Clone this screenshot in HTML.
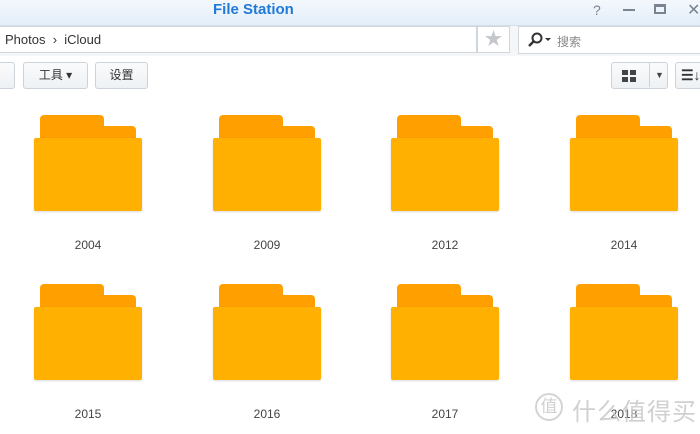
<!DOCTYPE html>
<html><head><meta charset="utf-8"><style>
*{margin:0;padding:0;box-sizing:border-box}
body{width:700px;height:434px;overflow:hidden;background:#fff;font-family:"Liberation Sans","Noto Sans CJK SC",sans-serif;position:relative}
.title{position:absolute;left:0;top:0;width:700px;height:26px;background:linear-gradient(#f4f8fc,#e3eef9);border-bottom:1px solid #d6dee8}
.title b{position:absolute;left:213px;top:1px;font-size:15px;color:#1f7ad8;font-family:"Liberation Sans",sans-serif}
.bar{position:absolute;top:26px;left:0;width:700px;height:30px;background:#f4f6f8}
.path{position:absolute;left:-2px;top:26px;width:479px;height:27px;background:#fff;border:1px solid #d0d6dd;font-size:13px;color:#333;padding:5px 0 0 6px}
.star{position:absolute;left:477px;top:26px;width:33px;height:27px;background:#fff;border:1px solid #d0d6dd;color:#c4c8cc;font-size:18px;text-align:center;line-height:25px}
.search{position:absolute;left:518px;top:26px;width:190px;height:28px;background:#fff;border:1px solid #d0d6dd;font-size:12px;color:#888;padding:6px 0 0 38px}
.btn{position:absolute;top:62px;height:27px;border:1px solid #cdd3da;border-radius:3px;background:linear-gradient(#fafbfc,#eef1f4);font-size:12px;color:#333;text-align:center;line-height:25px}
.f{position:absolute;width:110px;height:150px}
.f .t1{position:absolute;left:6px;top:0;width:64px;height:22px;background:#ff9f00;border-radius:4px 4px 0 0}
.f .t2{position:absolute;left:6px;top:11px;width:96px;height:14px;background:#ff9f00;border-radius:0 4px 0 0}
.f .bd{position:absolute;left:0;top:23px;width:108px;height:73px;background:#ffb000;border-radius:2px;box-shadow:0 1px 2px rgba(0,0,0,.15)}
.f .lb{position:absolute;left:0;top:123px;width:108px;text-align:center;font-size:12px;color:#444}
</style></head><body>
<div class="title"><b>File Station</b>
<span style="position:absolute;left:593px;top:2px;color:#7a8390;font-size:14px">?</span>
<span style="position:absolute;left:623px;top:9px;width:12px;height:2px;background:#7a8390"></span>
<span style="position:absolute;left:654px;top:4px;width:12px;height:10px;border:2px solid #7a8390;border-top-width:3px"></span>
<span style="position:absolute;left:687px;top:0px;color:#7a8390;font-size:16px">✕</span>
</div>
<div class="bar"></div>
<div class="path">Photos &nbsp;›&nbsp; iCloud</div>
<div class="star">★</div>
<div class="search">搜索
<svg style="position:absolute;left:8px;top:5px" width="26" height="16" viewBox="0 0 26 16"><circle cx="10" cy="6" r="4.5" fill="none" stroke="#333" stroke-width="2"/><line x1="6.5" y1="9.5" x2="2" y2="14" stroke="#333" stroke-width="2.5"/><path d="M18 6h6l-3 3z" fill="#333"/></svg></div>
<div class="btn" style="left:-5px;width:20px"></div>
<div class="btn" style="left:23px;width:65px">工具 ▾</div>
<div class="btn" style="left:95px;width:53px">设置</div>
<div class="btn" style="left:611px;width:57px">
<svg style="position:absolute;left:10px;top:7px" width="15" height="12"><rect x="0" y="0" width="6" height="5" fill="#444"/><rect x="8" y="0" width="6" height="5" fill="#444"/><rect x="0" y="7" width="6" height="5" fill="#444"/><rect x="8" y="7" width="6" height="5" fill="#444"/></svg>
<span style="position:absolute;left:37px;top:-1px;width:1px;height:25px;background:#cdd3da"></span>
<span style="position:absolute;left:43px;top:0;font-size:9px;color:#444">▼</span></div>
<div class="btn" style="left:675px;width:40px"><span style="position:absolute;left:5px;top:0;font-size:14px;color:#333;font-weight:bold">☰↓</span></div>

<div class="f" style="left:34px;top:115px"><div class="t1"></div><div class="t2"></div><div class="bd"></div><div class="lb">2004</div></div>
<div class="f" style="left:213px;top:115px"><div class="t1"></div><div class="t2"></div><div class="bd"></div><div class="lb">2009</div></div>
<div class="f" style="left:391px;top:115px"><div class="t1"></div><div class="t2"></div><div class="bd"></div><div class="lb">2012</div></div>
<div class="f" style="left:570px;top:115px"><div class="t1"></div><div class="t2"></div><div class="bd"></div><div class="lb">2014</div></div>
<div class="f" style="left:34px;top:284px"><div class="t1"></div><div class="t2"></div><div class="bd"></div><div class="lb">2015</div></div>
<div class="f" style="left:213px;top:284px"><div class="t1"></div><div class="t2"></div><div class="bd"></div><div class="lb">2016</div></div>
<div class="f" style="left:391px;top:284px"><div class="t1"></div><div class="t2"></div><div class="bd"></div><div class="lb">2017</div></div>
<div class="f" style="left:570px;top:284px"><div class="t1"></div><div class="t2"></div><div class="bd"></div><div class="lb">2018</div></div>

<div style="position:absolute;left:535px;top:393px;width:28px;height:28px;border:2px solid #d4d4d4;border-radius:50%;color:#d0d0d0;font-size:17px;text-align:center;line-height:24px">值</div>
<div style="position:absolute;left:572px;top:392px;font-size:24px;color:rgba(200,200,200,.85);letter-spacing:1px">什么值得买</div>
</body></html>
